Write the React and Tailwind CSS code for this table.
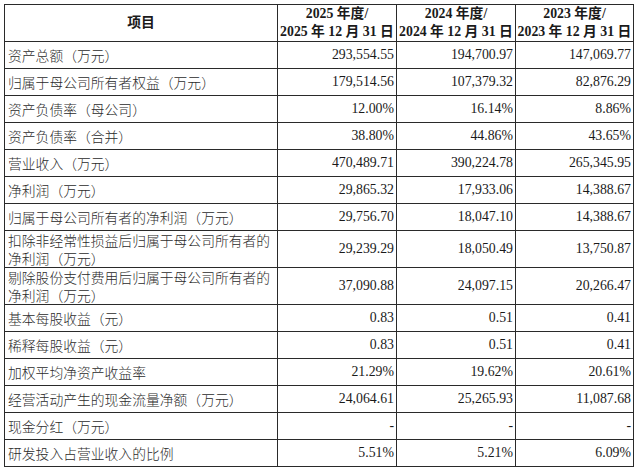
import React from "react";

const rows = [
  ["资产总额（万元）", "293,554.55", "194,700.97", "147,069.77"],
  ["归属于母公司所有者权益（万元）", "179,514.56", "107,379.32", "82,876.29"],
  ["资产负债率（母公司）", "12.00%", "16.14%", "8.86%"],
  ["资产负债率（合并）", "38.80%", "44.86%", "43.65%"],
  ["营业收入（万元）", "470,489.71", "390,224.78", "265,345.95"],
  ["净利润（万元）", "29,865.32", "17,933.06", "14,388.67"],
  ["归属于母公司所有者的净利润（万元）", "29,756.70", "18,047.10", "14,388.67"],
  ["扣除非经常性损益后归属于母公司所有者的净利润（万元）", "29,239.29", "18,050.49", "13,750.87", true],
  ["剔除股份支付费用后归属于母公司所有者的净利润（万元）", "37,090.88", "24,097.15", "20,266.47", true],
  ["基本每股收益（元）", "0.83", "0.51", "0.41"],
  ["稀释每股收益（元）", "0.83", "0.51", "0.41"],
  ["加权平均净资产收益率", "21.29%", "19.62%", "20.61%"],
  ["经营活动产生的现金流量净额（万元）", "24,064.61", "25,265.93", "11,087.68"],
  ["现金分红（万元）", "-", "-", "-"],
  ["研发投入占营业收入的比例", "5.51%", "5.21%", "6.09%"],
];

const years = ["2025", "2024", "2023"];

export default function App() {
  return (
    <div className="w-[640px] h-[469px] bg-white pt-[4px] pl-[4px] overflow-hidden">
      <table
        className="border-collapse table-fixed w-[629px] text-[13.8px] text-[#1a1a1a]"
        style={{ fontFamily: '"Liberation Serif", "Noto Sans CJK SC", serif' }}
      >
        <colgroup>
          <col className="w-[273px]" />
          <col className="w-[119px]" />
          <col className="w-[119px]" />
          <col className="w-[118px]" />
        </colgroup>
        <thead>
          <tr className="h-[37px]">
            <th className="border border-[#2a2a2a] font-bold text-center align-middle">项目</th>
            {years.map((y) => (
              <th
                key={y}
                className="border border-[#2a2a2a] font-bold text-center align-middle leading-[18px] whitespace-nowrap px-0"
              >
                <div>{y} 年度/</div>
                <div>{y} 年 12 月 31 日</div>
              </th>
            ))}
          </tr>
        </thead>
        <tbody>
          {rows.map(([label, a, b, c, tall]) => (
            <tr key={label} className={tall ? "h-[36px]" : "h-[27px]"}>
              <td
                className={
                  "border border-[#2a2a2a] pl-[3px] pr-[2px] align-middle text-[#2b2b2b] " +
                  (tall ? "leading-[18px]" : "leading-[20px]")
                }
                style={{ fontFamily: '"Noto Sans CJK SC", sans-serif', fontWeight: 300 }}
              >
                {label}
              </td>
              {[a, b, c].map((v, i) => (
                <td
                  key={i}
                  className="border border-[#2a2a2a] text-right pr-[2px] align-middle whitespace-nowrap"
                >
                  {v}
                </td>
              ))}
            </tr>
          ))}
        </tbody>
      </table>
    </div>
  );
}
